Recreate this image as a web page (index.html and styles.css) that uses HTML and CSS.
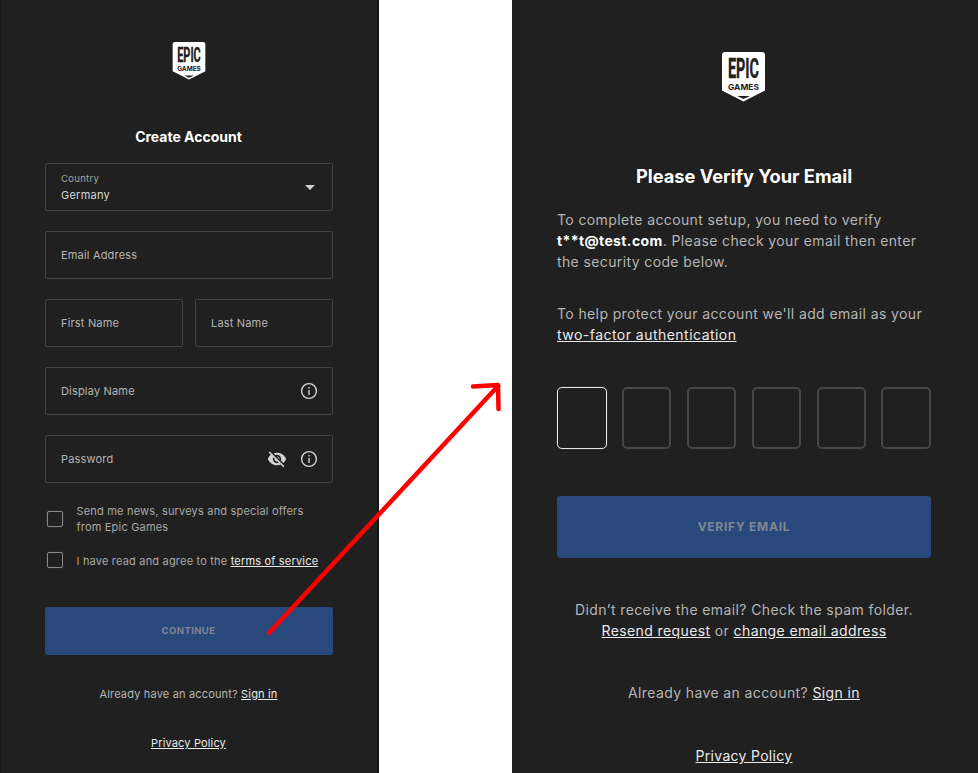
FILE: index.html
```html
<!DOCTYPE html>
<html lang="en">
<head>
<meta charset="UTF-8">
<meta name="viewport" content="width=device-width, initial-scale=1.0">
<title>Epic Games sign up flow</title>
<link rel="stylesheet" href="styles.css">
</head>
<body>

<div class="shot">
    <section class="panel panel-signup">
        <svg class="logo logo-small" viewBox="0 0 43 50">
            <path class="logo-shield" d="M3 0H40a3 3 0 0 1 3 3V38.5L21.5 49.5 0 38.5V3a3 3 0 0 1 3-3z"/>
            <path class="logo-notch" d="M15 44H28L21.5 47z"/>
            <text class="logo-epic" x="6" y="26" textLength="31" lengthAdjust="spacingAndGlyphs">EPIC</text>
            <text class="logo-games" x="6" y="38" textLength="31" lengthAdjust="spacingAndGlyphs">GAMES</text>
        </svg>

        <h2 class="signup-title">Create Account</h2>

        <form class="signup-form">
            <div class="field field-select">
                <div class="select-value">
                    <span class="select-label">Country</span>
                    <span class="select-text">Germany</span>
                </div>
                <span class="caret"></span>
            </div>
            <div class="field"><span class="field-label">Email Address</span></div>
            <div class="field-row">
                <div class="field"><span class="field-label">First Name</span></div>
                <div class="field"><span class="field-label">Last Name</span></div>
            </div>
            <div class="field">
                <span class="field-label">Display Name</span>
                <svg class="icon-info" viewBox="0 0 18 18">
                    <circle cx="9" cy="9" r="7.4"/>
                    <path d="M9 8v5"/>
                    <path d="M9 5v1.6"/>
                </svg>
            </div>
            <div class="field">
                <span class="field-label">Password</span>
                <svg class="icon-eye" viewBox="0 0 24 24">
                    <path d="M12 7c2.76 0 5 2.24 5 5 0 .65-.13 1.26-.36 1.83l2.92 2.92c1.51-1.26 2.7-2.89 3.43-4.75-1.73-4.39-6-7.5-11-7.5-1.4 0-2.74.25-3.98.7l2.16 2.16C10.74 7.13 11.35 7 12 7zM2 4.27l2.28 2.28.46.46C3.08 8.3 1.78 10.02 1 12c1.73 4.39 6 7.5 11 7.5 1.55 0 3.03-.3 4.38-.84l.42.42L19.73 22 21 20.73 3.27 3 2 4.27zM7.53 9.8l1.55 1.55c-.05.21-.08.43-.08.65 0 1.66 1.34 3 3 3 .22 0 .44-.03.65-.08l1.55 1.55c-.67.33-1.41.53-2.2.53-2.76 0-5-2.24-5-5 0-.79.2-1.53.53-2.2zm4.31-.78l3.15 3.15.02-.16c0-1.66-1.34-3-3-3l-.17.01z"/>
                </svg>
                <svg class="icon-info icon-info-near" viewBox="0 0 18 18">
                    <circle cx="9" cy="9" r="7.4"/>
                    <path d="M9 8v5"/>
                    <path d="M9 5v1.6"/>
                </svg>
            </div>

            <div class="check-row check-news">
                <span class="check-box"></span>
                <span class="check-text">Send me news, surveys and special offers<br>from Epic Games</span>
            </div>
            <div class="check-row check-terms">
                <span class="check-box"></span>
                <span class="check-text">I have read and agree to the <a href="#">terms of service</a></span>
            </div>

            <button class="btn btn-continue" type="button">CONTINUE</button>
        </form>

        <p class="signup-foot">Already have an account? <a href="#">Sign in</a></p>
        <p class="signup-policy"><a href="#">Privacy Policy</a></p>
    </section>

    <div class="gutter"></div>

    <section class="panel panel-verify">
        <svg class="logo logo-big" viewBox="0 0 43 50">
            <path class="logo-shield" d="M3 0H40a3 3 0 0 1 3 3V38.5L21.5 49.5 0 38.5V3a3 3 0 0 1 3-3z"/>
            <path class="logo-notch" d="M15 44H28L21.5 47z"/>
            <text class="logo-epic" x="6" y="26" textLength="31" lengthAdjust="spacingAndGlyphs">EPIC</text>
            <text class="logo-games" x="6" y="38" textLength="31" lengthAdjust="spacingAndGlyphs">GAMES</text>
        </svg>

        <h1 class="verify-title">Please Verify Your Email</h1>

        <p class="verify-text">To complete account setup, you need to verify <b>t**t@test.com</b>. Please check your email then enter the security code below.</p>
        <p class="verify-text verify-help">To help protect your account we'll add email as your <a href="#">two-factor authentication</a></p>

        <div class="code-row">
            <span class="code-cell code-active"></span>
            <span class="code-cell"></span>
            <span class="code-cell"></span>
            <span class="code-cell"></span>
            <span class="code-cell"></span>
            <span class="code-cell"></span>
        </div>

        <button class="btn btn-verify" type="button">VERIFY EMAIL</button>

        <p class="verify-resend">Didn’t receive the email? Check the spam folder.<br><a href="#">Resend request</a> or <a href="#">change email address</a></p>
        <p class="verify-foot">Already have an account? <a href="#">Sign in</a></p>
        <p class="verify-policy"><a href="#">Privacy Policy</a></p>
    </section>

    <svg class="arrow" viewBox="0 0 978 773">
        <path d="M269 633L498 386"/>
        <path d="M473 386.500L498 385L498.500 409"/>
    </svg>
</div>

</body>
</html>
```

FILE: styles.css
```css
* {
    box-sizing: border-box;
}

body {
    font-family: Inter, "Liberation Sans", sans-serif;
    background-color: #fff;
    margin: 0;
    padding: 0;
}

a {
    color: #eaeaea;
    text-decoration: underline;
}

p, h1, h2 {
    margin: 0;
}

.shot {
    position: relative;
    display: flex;
    width: 978px;
    height: 773px;
    overflow: hidden;
}

.panel {
    display: flex;
    flex-direction: column;
    align-items: center;
    background-color: #202020;
    padding: 0 45px;
}

.panel-signup {
    width: 379px;
    border-right: 2px solid #141414;
    border-left: 1px solid #181818;
    padding: 0 45px 0 44px;
}

.gutter {
    width: 133px;
}

.panel-verify {
    width: 466px;
    padding: 0 47px 0 45px;
}

/* logo */
.logo {
    display: block;
    flex: none;
    overflow: visible;
}

.logo-small {
    width: 34px;
    height: 38px;
    margin-top: 42px;
}

.logo-big {
    width: 43px;
    height: 50px;
    margin: 52px 1px 0 0;
}

.logo-shield {
    fill: #fff;
}

.logo-notch {
    fill: #202020;
}

.logo-epic {
    font-family: Roboto, sans-serif;
    font-weight: 700;
    font-size: 27px;
    fill: #202020;
    stroke: #202020;
    stroke-width: 0.4;
}

.logo-games {
    font-family: Inter, sans-serif;
    font-weight: 700;
    font-size: 8px;
    fill: #202020;
}

/* signup panel */
.signup-title {
    margin-top: 48px;
    font-size: 14px;
    line-height: 18px;
    font-weight: 700;
    color: #fff;
}

.signup-form {
    display: flex;
    flex-direction: column;
    width: 288px;
    margin-top: 17px;
}

.field {
    display: flex;
    align-items: center;
    height: 48px;
    flex: 1;
    padding: 0 15px 0 15.500px;
    margin-bottom: 20px;
    border: 1px solid #434343;
    border-radius: 2px;
}

.signup-form > .field {
    flex: none;
}

.field-row {
    display: flex;
    gap: 12px;
}

.field-label {
    flex: 1;
    font-size: 11px;
    letter-spacing: 0.18px;
    color: #b5b5b5;
}

.select-value {
    display: flex;
    flex-direction: column;
    flex: 1;
    padding-top: 1px;
}

.select-label {
    font-size: 9.500px;
    line-height: 12px;
    letter-spacing: 0.3px;
    color: #a6a6a6;
}

.select-text {
    margin-top: 4px;
    font-size: 11px;
    line-height: 13px;
    letter-spacing: 0.25px;
    color: #d4d4d4;
}

.caret {
    width: 0;
    height: 0;
    margin-right: 2px;
    border-left: 5px solid transparent;
    border-right: 5px solid transparent;
    border-top: 5px solid #d0d0d0;
}

.icon-info {
    width: 18px;
    height: 18px;
    margin-right: -1px;
    fill: none;
    stroke: #d4d4d4;
    stroke-width: 1.400;
}

.icon-info-near {
    margin-left: 13px;
}

.icon-eye {
    width: 20px;
    height: 20px;
    fill: #d4d4d4;
}

.check-row {
    display: flex;
    align-items: flex-start;
    font-size: 11px;
    line-height: 16px;
    letter-spacing: 0.19px;
    color: #a8a8a8;
}

.check-terms {
    margin-top: 18px;
}

.check-box {
    flex: none;
    width: 16px;
    height: 16px;
    margin: 0 14px 0 2px;
    border: 1px solid #8a8a8a;
    border-radius: 2px;
    box-shadow: 0 0 1px #666;
}

.check-news .check-box {
    margin-top: 8px;
}

.check-terms .check-box {
    margin-top: -1px;
}

.btn {
    display: block;
    width: 100%;
    padding: 0 0 2px;
    border: none;
    border-radius: 3px;
    background-color: #29487c;
    color: #7f8794;
    font-family: inherit;
    font-weight: 700;
}

.btn-continue {
    height: 48px;
    margin-top: 38px;
    font-size: 9.500px;
    letter-spacing: 0.4px;
}

.signup-foot {
    margin-top: 31px;
    font-size: 11px;
    line-height: 16px;
    letter-spacing: 0.17px;
    color: #b5b5b5;
}

.signup-policy {
    margin-top: 33px;
    font-size: 11px;
    line-height: 16px;
    letter-spacing: 0.15px;
}

/* verify panel */
.verify-title {
    margin-top: 62px;
    font-size: 18.250px;
    line-height: 24px;
    font-weight: 700;
    color: #fff;
}

.verify-text {
    width: 100%;
    margin-top: 21px;
    font-size: 14px;
    line-height: 21px;
    letter-spacing: 0.38px;
    color: #b5b5b5;
}

.verify-text b {
    color: #fff;
    font-weight: 700;
}

.verify-text a {
    letter-spacing: 0.47px;
}

.verify-help {
    margin-top: 31px;
}

.code-row {
    display: flex;
    justify-content: space-between;
    width: 100%;
    margin-top: 42px;
}

.code-cell {
    width: 49.500px;
    height: 62px;
    border: 2px solid #464646;
    border-radius: 5px;
}

.code-active {
    border: 1px solid #e6e6e6;
    box-shadow: 0 0 1px #999;
}

.btn-verify {
    height: 62px;
    margin-top: 47px;
    font-size: 12px;
    letter-spacing: 0.75px;
}

.verify-resend {
    margin-top: 41px;
    text-align: center;
    font-size: 14px;
    line-height: 21px;
    letter-spacing: 0.39px;
    color: #b5b5b5;
}

.verify-foot {
    margin-top: 41px;
    font-size: 14px;
    line-height: 21px;
    letter-spacing: 0.38px;
    color: #b5b5b5;
}

.verify-policy {
    margin-top: 42px;
    font-size: 14px;
    line-height: 21px;
    letter-spacing: 0.3px;
}

/* red annotation drawn over both panels */
.arrow {
    position: absolute;
    left: 0;
    top: 0;
    width: 978px;
    height: 773px;
    pointer-events: none;
    fill: none;
    stroke: #fe0000;
    stroke-width: 4.500;
    stroke-linecap: round;
    stroke-linejoin: round;
}
```
